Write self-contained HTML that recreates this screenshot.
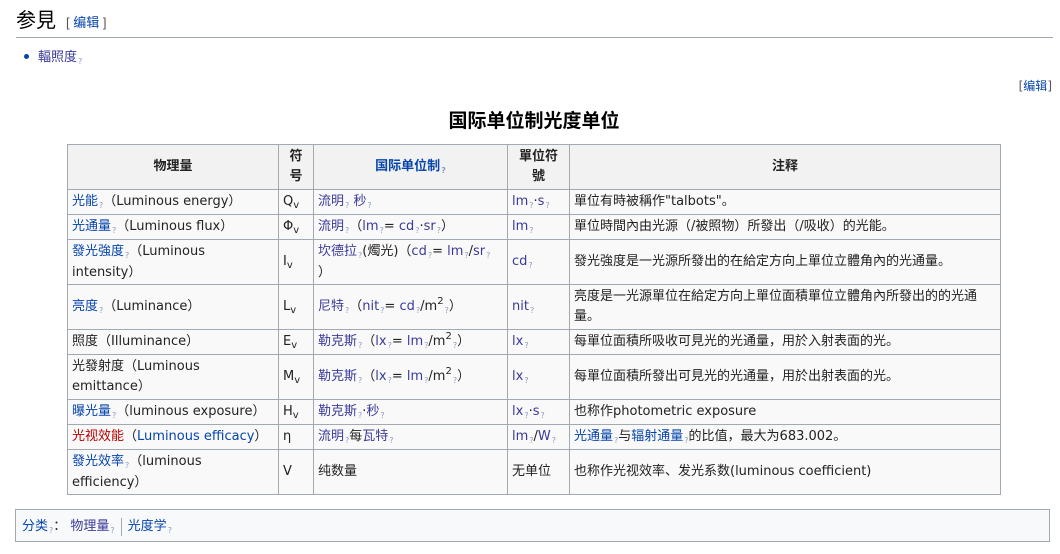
<!DOCTYPE html>
<html><head><meta charset="utf-8"><style>
body{margin:0;background:#fff;font-family:"DejaVu Sans","Noto Sans CJK SC",sans-serif;font-size:13px;color:#222;width:1060px;height:554px;overflow:hidden;position:relative}
a{color:#0645ad;text-decoration:none}
.v{color:#3a3a9a}
.r{color:#ba0000}
.q{font-size:8px;color:#8a9ac0;position:relative;top:3px;margin-left:1px}
h2{position:absolute;left:16px;top:6px;margin:0;font-weight:normal;font-size:20px;font-family:"Liberation Sans","Noto Sans CJK SC",sans-serif;color:#000;width:1037px;border-bottom:1px solid #a2a9b1;height:31px;line-height:31px}
h2 .e{font-size:13px;color:#555;margin-left:10px}
.li{position:absolute;left:24px;top:46px}
.li:before{content:"";display:inline-block;width:5px;height:5px;border-radius:50%;background:#0645ad;margin-right:9px;vertical-align:2px}
.ed{position:absolute;right:8px;top:77px;font-size:12px;color:#555}
.t{position:absolute;left:0;width:1068px;top:106px;text-align:center;font-weight:bold;font-size:19px;color:#000;font-family:"Liberation Sans","Noto Sans CJK SC",sans-serif}
table{position:absolute;left:67px;top:144px;border-collapse:collapse;background:#f9f9f9;table-layout:fixed}
td,th{border:1px solid #a2a9b1;padding:0 4px;line-height:20px;vertical-align:middle;text-align:left;overflow:hidden;white-space:nowrap}
td:last-child{white-space:normal}
th{background:#f2f2f2;text-align:center;font-weight:bold}
sub{font-size:10px;position:relative;top:3px;vertical-align:baseline;line-height:0}
sup{font-size:10px;position:relative;top:-6px;vertical-align:baseline;line-height:0}
.cat{position:absolute;left:15px;top:509px;width:1035px;height:33px;border:1px solid #a2a9b1;background:#f8f9fa;line-height:33px;box-sizing:border-box;padding-left:6px}
.sep{display:inline-block;width:1px;height:18px;background:#a2a9b1;vertical-align:middle;margin:0 6px}
</style></head><body>
<h2>参見<span class="e">[ <a>编辑</a> ]</span></h2>
<div class="li"><a class="v">輻照度</a><span class="q">?</span></div>
<div class="ed">[<a>编辑</a>]</div>
<div class="t">国际单位制光度单位</div>
<table>
<colgroup><col style="width:211px"><col style="width:35px"><col style="width:194px"><col style="width:62px"><col style="width:431px"></colgroup>
<tr style="height:45px"><th>物理量</th><th>符<br>号</th><th><a>国际单位制</a><span class="q">?</span></th><th>單位符<br>號</th><th>注释</th></tr>
<tr style="height:25px"><td><a>光能</a><span class="q">?</span>（Luminous energy）</td><td>Q<sub>v</sub></td><td><a class="v">流明</a><span class="q">?</span> <a class="v">秒</a><span class="q">?</span></td><td><a class="v">lm</a><span class="q">?</span>·<a class="v">s</a><span class="q">?</span></td><td>單位有時被稱作"talbots"。</td></tr>
<tr style="height:25px"><td><a>光通量</a><span class="q">?</span>（Luminous flux）</td><td>Φ<sub>v</sub></td><td><a class="v">流明</a><span class="q">?</span>（<a class="v">lm</a><span class="q">?</span>= <a class="v">cd</a><span class="q">?</span>·<a class="v">sr</a><span class="q">?</span>）</td><td><a class="v">lm</a><span class="q">?</span></td><td>單位時間內由光源（/被照物）所發出（/吸收）的光能。</td></tr>
<tr style="height:45px"><td><a>發光強度</a><span class="q">?</span>（Luminous<br>intensity）</td><td>I<sub>v</sub></td><td><a class="v">坎德拉</a><span class="q">?</span>(燭光)（<a class="v">cd</a><span class="q">?</span>= <a class="v">lm</a><span class="q">?</span>/<a class="v">sr</a><span class="q">?</span><br>）</td><td><a class="v">cd</a><span class="q">?</span></td><td>發光強度是一光源所發出的在給定方向上單位立體角內的光通量。</td></tr>
<tr style="height:45px"><td><a>亮度</a><span class="q">?</span>（Luminance）</td><td>L<sub>v</sub></td><td><a class="v">尼特</a><span class="q">?</span>（<a class="v">nit</a><span class="q">?</span>= <a class="v">cd</a><span class="q">?</span>/m<sup>2</sup><span class="q">?</span>）</td><td><a class="v">nit</a><span class="q">?</span></td><td>亮度是一光源單位在給定方向上單位面積單位立體角內所發出的的光通量。</td></tr>
<tr style="height:25px"><td>照度（Illuminance）</td><td>E<sub>v</sub></td><td><a class="v">勒克斯</a><span class="q">?</span>（<a class="v">lx</a><span class="q">?</span>= <a class="v">lm</a><span class="q">?</span>/m<sup>2</sup><span class="q">?</span>）</td><td><a class="v">lx</a><span class="q">?</span></td><td>每單位面積所吸收可見光的光通量，用於入射表面的光。</td></tr>
<tr style="height:45px"><td>光發射度（Luminous<br>emittance）</td><td>M<sub>v</sub></td><td><a class="v">勒克斯</a><span class="q">?</span>（<a class="v">lx</a><span class="q">?</span>= <a class="v">lm</a><span class="q">?</span>/m<sup>2</sup><span class="q">?</span>）</td><td><a class="v">lx</a><span class="q">?</span></td><td>每單位面積所發出可見光的光通量，用於出射表面的光。</td></tr>
<tr style="height:25px"><td><a>曝光量</a><span class="q">?</span>（luminous exposure）</td><td>H<sub>v</sub></td><td><a class="v">勒克斯</a><span class="q">?</span>·<a class="v">秒</a><span class="q">?</span></td><td><a class="v">lx</a><span class="q">?</span>·<a class="v">s</a><span class="q">?</span></td><td>也称作photometric exposure</td></tr>
<tr style="height:25px"><td><a class="r">光视效能</a>（<a>Luminous efficacy</a>）</td><td>η</td><td><a class="v">流明</a><span class="q">?</span>每<a class="v">瓦特</a><span class="q">?</span></td><td><a class="v">lm</a><span class="q">?</span>/<a class="v">W</a><span class="q">?</span></td><td><a>光通量</a><span class="q">?</span>与<a>辐射通量</a><span class="q">?</span>的比值，最大为683.002。</td></tr>
<tr style="height:45px"><td><a>發光效率</a><span class="q">?</span>（luminous<br>efficiency）</td><td>V</td><td>纯数量</td><td>无单位</td><td>也称作光视效率、发光系数(luminous coefficient)</td></tr>
</table>
<div class="cat"><a>分类</a><span class="q">?</span>： <a class="v">物理量</a><span class="q">?</span><span class="sep"></span><a>光度学</a><span class="q">?</span></div>
</body></html>
